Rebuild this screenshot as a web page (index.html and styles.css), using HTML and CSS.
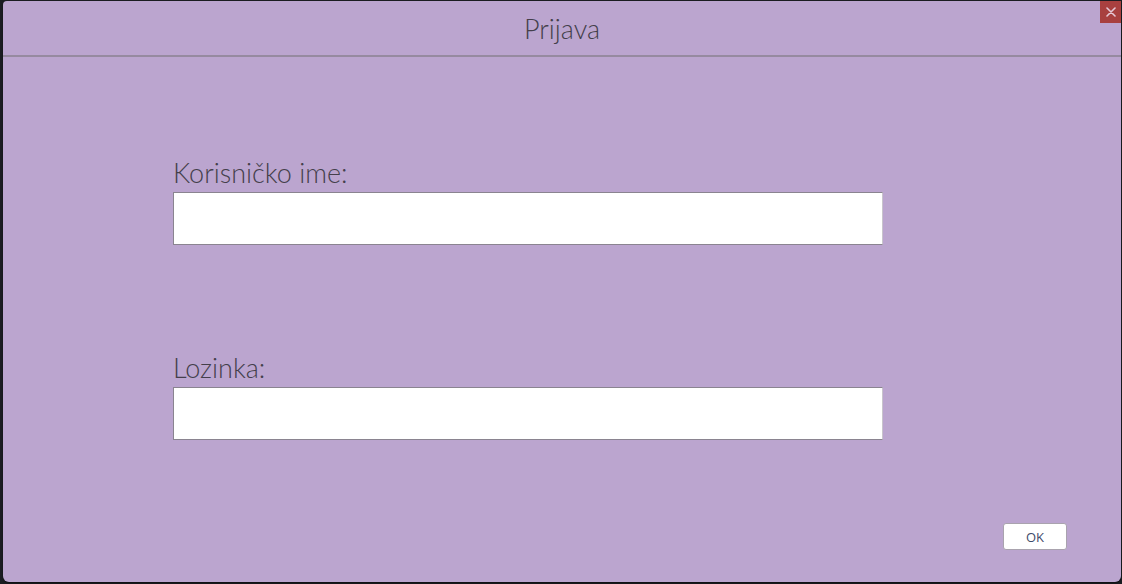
FILE: index.html
```html
<!DOCTYPE html>
<html>
<head>
<meta charset="utf-8">
<link rel="stylesheet" href="styles.css">
</head>
<body>
<div class="window">
  <div class="titlebar">
    <span class="title">Prijava</span>
    <button class="close" aria-label="Zatvori">
      <svg width="10" height="10" viewBox="0 0 10 10"><path d="M1 1L9 9M9 1L1 9" stroke="#e6c9d6" stroke-width="1.6" stroke-linecap="round"/></svg>
    </button>
  </div>
  <div class="content">
    <div class="form">
      <label class="field">
        <span class="label">Korisničko ime:</span>
        <input class="input" type="text">
      </label>
      <label class="field">
        <span class="label">Lozinka:</span>
        <input class="input" type="password">
      </label>
    </div>
    <div class="actions">
      <button class="ok">OK</button>
    </div>
  </div>
</div>
</body>
</html>
```
FILE: styles.css
```css
html, body {
  margin: 0;
  padding: 0;
  height: 100%;
}
body {
  background: #1b1d22;
  padding: 1px 1px 2px 3px;
  box-sizing: border-box;
  font-family: "Lato", "Noto Sans", sans-serif;
  color: #443f4b;
}
.window {
  height: 581px;
  background: #bba5cf;
  border-radius: 4px 0 6px 6px;
  box-shadow: 0 1px 2px rgba(0,0,0,0.5);
  display: flex;
  flex-direction: column;
  overflow: hidden;
}
.titlebar {
  height: 54px;
  border-bottom: 2px solid #968aa0;
  display: flex;
  align-items: center;
  justify-content: center;
  position: relative;
}
.title {
  font-size: 27px;
  font-weight: 300;
  color: #443f4b;
}
.close {
  position: absolute;
  top: 0;
  right: 0;
  width: 21px;
  height: 22px;
  border: none;
  padding: 0;
  background: #a8403f;
  display: flex;
  align-items: center;
  justify-content: center;
}
.content {
  flex: 1;
  display: flex;
  flex-direction: column;
  padding: 100px 54px 32px 170px;
}
.form {
  display: flex;
  flex-direction: column;
  gap: 107px;
  width: 710px;
}
.field {
  display: flex;
  flex-direction: column;
}
.label {
  font-size: 27px;
  font-weight: 300;
  line-height: 31px;
  color: #443f4b;
}
.input {
  margin-top: 4px;
  height: 53px;
  box-sizing: border-box;
  border: 1px solid #8a8490;
  border-right-color: #c8c4cc;
  background: #fff;
  outline: none;
  font-size: 18px;
  padding: 0 8px;
}
.actions {
  margin-top: auto;
  display: flex;
  justify-content: flex-end;
}
.ok {
  width: 64px;
  height: 27px;
  background: #fff;
  border: 1px solid #a9a3ae;
  border-radius: 3px;
  font-family: "Open Sans", "Noto Sans", sans-serif;
  font-size: 13px;
  color: #3e4a6a;
  padding: 0;
}
```
